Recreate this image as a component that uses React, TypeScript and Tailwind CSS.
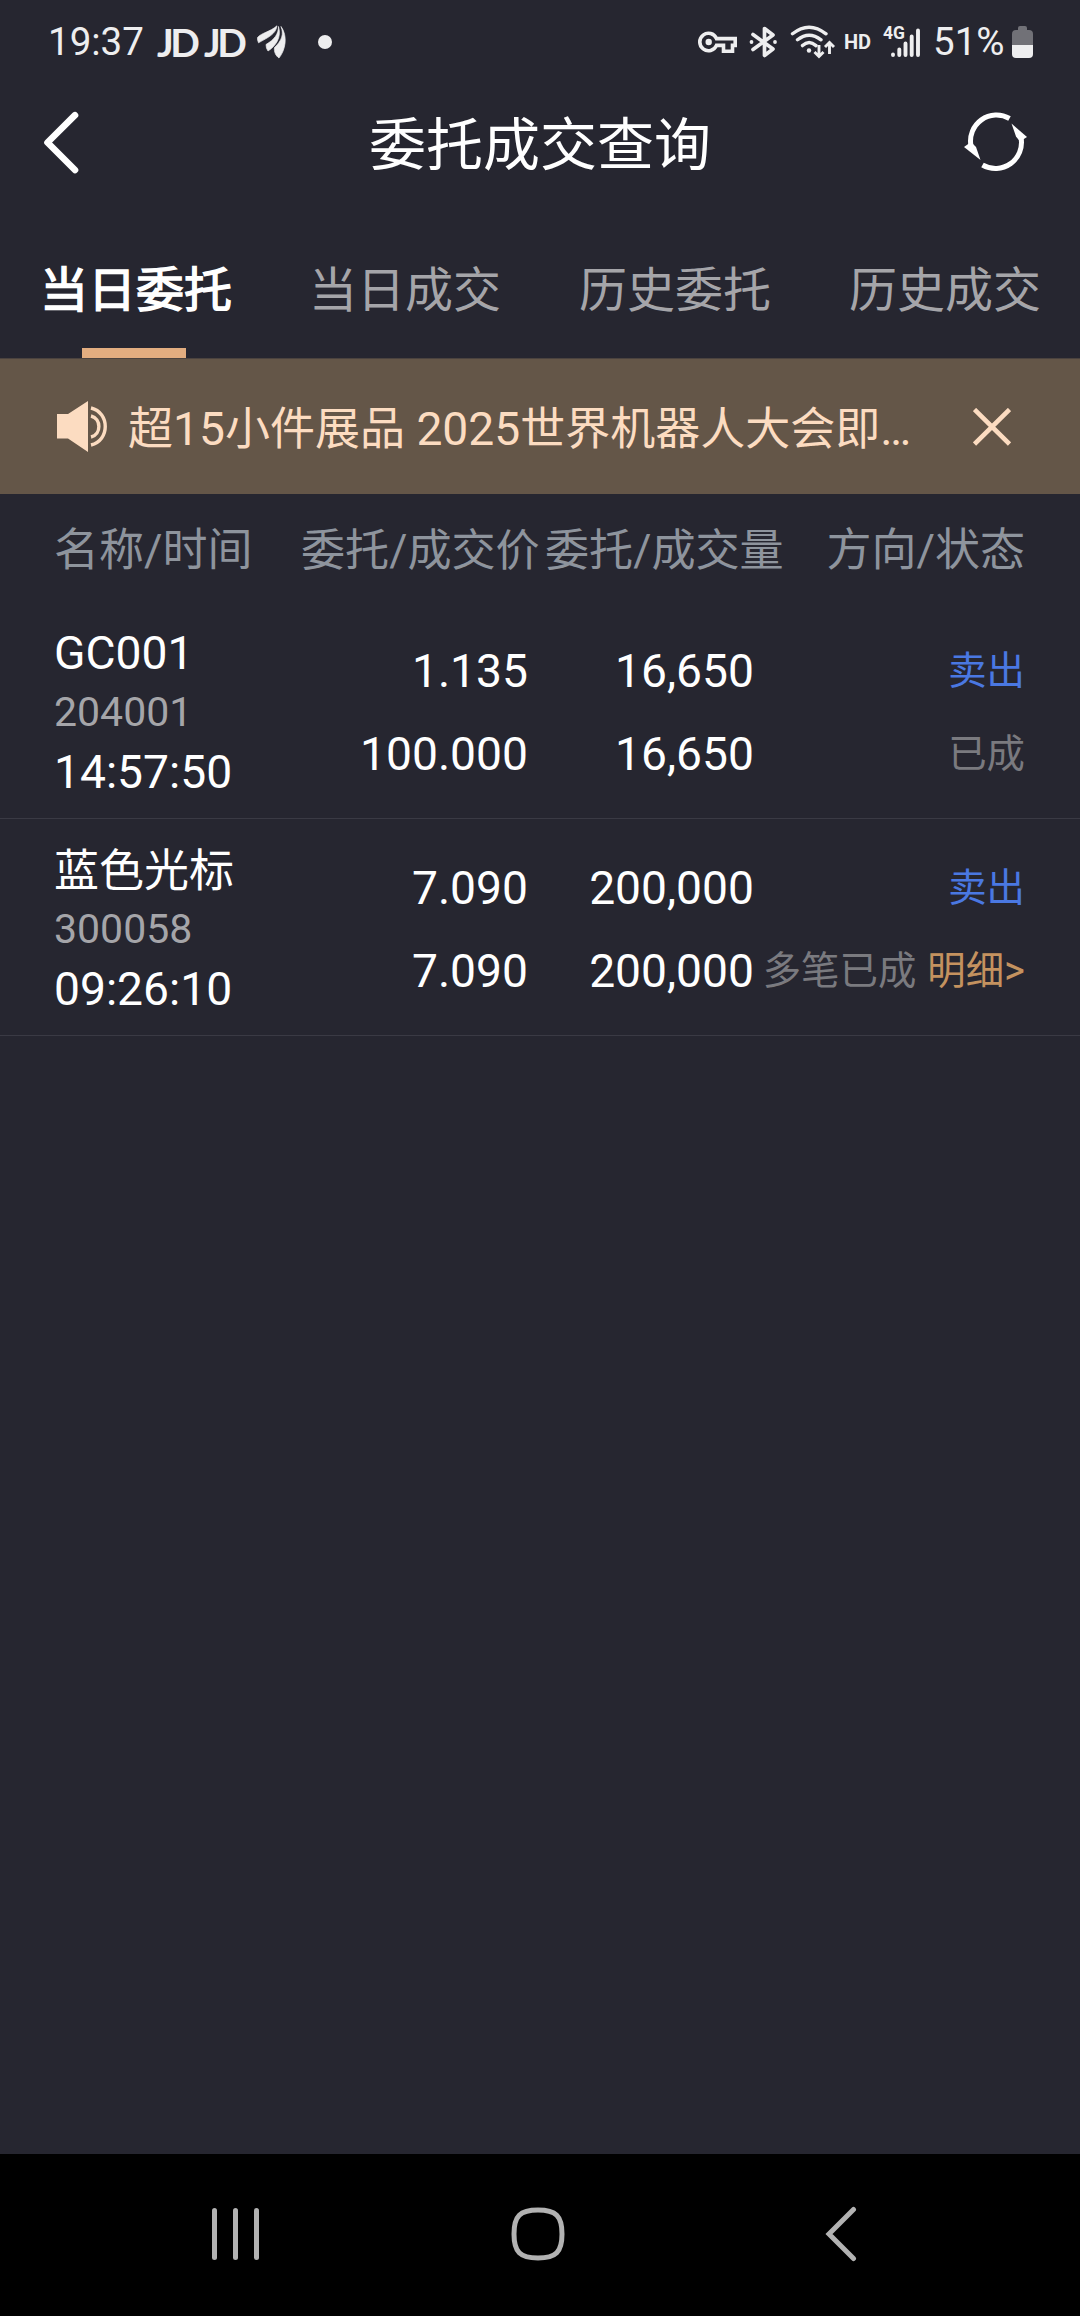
import React from "react";

type Part = { text: string; cjk?: boolean };

const tabs = ["当日委托", "当日成交", "历史委托", "历史成交"];

type Order = {
  name: string;
  cjkName?: boolean;
  code: string;
  time: string;
  price: string;
  dealPrice: string;
  amount: string;
  dealAmount: string;
  side: string;
  status: string;
  detail?: string;
};

const orders: Order[] = [
  {
    name: "GC001",
    code: "204001",
    time: "14:57:50",
    price: "1.135",
    dealPrice: "100.000",
    amount: "16,650",
    dealAmount: "16,650",
    side: "卖出",
    status: "已成",
  },
  {
    name: "蓝色光标",
    cjkName: true,
    code: "300058",
    time: "09:26:10",
    price: "7.090",
    dealPrice: "7.090",
    amount: "200,000",
    dealAmount: "200,000",
    side: "卖出",
    status: "多笔已成",
    detail: "明细>",
  },
];

const notice: Part[] = [
  { text: "超", cjk: true },
  { text: "15" },
  { text: "小件展品", cjk: true },
  { text: " 2025" },
  { text: "世界机器人大会即", cjk: true },
  { text: "…" },
];

function StatusBar() {
  return (
    <div className="flex h-[84px] shrink-0 items-center justify-between pl-[48px] pr-[47px] text-[#eeeeef]">
      <div className="flex h-full items-center">
        <span className="w-[109px] text-[38.5px] leading-[84px]">19:37</span>
        <span className="w-[47px] font-['Lato'] text-[39px] font-bold leading-[81px] tracking-[-3.500px]">JD</span>
        <span className="w-[53px] font-['Lato'] text-[39px] font-bold leading-[81px] tracking-[-3.500px]">JD</span>
        <svg className="h-[34px] w-[30px]" viewBox="0 0 30 34" fill="currentColor" stroke="currentColor" strokeWidth=".7">
          <path d="M.5 12.500C5 7.500 13 7 20 .8C19 9 11 12.500 1.500 17.800Q.2 15 .5 12.500Z" />
          <path d="M21.500 1.500C21.500 9 17.500 14.500 9 19.500Q9 23.500 11 26C18 21.500 25 13 21.500 1.500Z" />
          <path d="M24 1.500C27 9 25 15.500 17.500 22.500C16.800 27 19 31 22 33C28.500 25 31 11 24 1.500Z" />
        </svg>
        <span className="ml-[31px] h-[14px] w-[14px] rounded-full bg-[#eeeeef]" />
      </div>
      <div className="flex h-full items-center">
        <svg className="h-[36px] w-[142px]" viewBox="0 0 142 36" fill="none" stroke="currentColor">
          <g strokeWidth="3.600">
            <path d="M19.500 14.600A8.700 8.700 0 1 0 19.500 21.400H26.500V27.200H35.500V21.400H38.200V14.600Z" />
            <circle cx="11.700" cy="18" r="3.200" fill="currentColor" stroke="none" />
          </g>
          <g strokeWidth="3.700" strokeLinecap="round" strokeLinejoin="round">
            <path d="M56 10.500L76 25L67.500 31.500V4.500L76 11L56 25.500" />
          </g>
          <circle cx="54.500" cy="18" r="1.900" fill="currentColor" stroke="none" />
          <circle cx="78" cy="18" r="1.900" fill="currentColor" stroke="none" />
          <g strokeWidth="3.400" strokeLinecap="round">
            <path d="M95.500 9.800Q112 -3.500 129 9.800M100.500 15.800Q112 6.500 124 15.800M105.500 21.600Q112 15.500 119 21.600" />
          </g>
          <circle cx="112" cy="26.500" r="2.200" fill="currentColor" stroke="none" />
          <path d="M122 21V32M117.500 28L122 32.500L126.500 28M132.500 30V19M128 23L132.500 18.500L137 23" strokeWidth="2.900" />
        </svg>
        <span className="w-[44px] pl-[5px] text-[20px] font-bold leading-[84px]">HD</span>
        <span className="h-[31px] w-[21px] whitespace-nowrap text-[17.5px] font-bold leading-[13px]">4G</span>
        <svg className="ml-[-22px] h-[36px] w-[51px]" viewBox="0 0 51 36" stroke="currentColor" strokeWidth="3.900" strokeLinecap="round">
          <path d="M11 30.500V31M17.300 25.500V31M23.500 19.500V31M29.700 12.500V31M36 6.500V31" />
        </svg>
        <span className="w-[79px] text-[38.5px] leading-[84px]">51%</span>
        <svg className="h-[32px] w-[21px]" viewBox="0 0 21 32">
          <path d="M6 4V2Q6 0 8 0H13Q15 0 15 2V4H17Q21 4 21 8V19H0V8Q0 4 4 4Z" fill="#717177" />
          <path d="M0 19H21V28Q21 32 17 32H4Q0 32 0 28Z" fill="currentColor" />
        </svg>
      </div>
    </div>
  );
}

function Header() {
  return (
    <header className="flex h-[118px] shrink-0 items-center text-white">
      <div className="w-[118px] pl-[43px]">
        <svg className="h-[64px] w-[38px]" viewBox="0 0 38 64" fill="none" stroke="currentColor" strokeWidth="6.600" strokeLinecap="round" strokeLinejoin="round">
          <path d="M32 4.200L4.500 31.500L32 59" />
        </svg>
      </div>
      <h1 className="flex-1 pt-[5px] text-center text-[57px] leading-[118px]">委托成交查询</h1>
      <div className="w-[118px]">
        <svg className="h-[64px] w-[68px]" viewBox="0 0 68 64" fill="none" stroke="currentColor" strokeWidth="5">
          <path d="M47.500 7.500A26 26 0 0 0 9 35M20.500 54A26 26 0 0 0 59 26.500" />
          <path d="M49.500 12.500L65 26L58 30.500L54 25.500Z" fill="currentColor" stroke="none" />
          <path d="M18.500 49L2 36L9 31L14 36Z" fill="currentColor" stroke="none" />
        </svg>
      </div>
    </header>
  );
}

function Tabs() {
  return (
    <nav className="grid h-[157px] shrink-0 grid-cols-4 border-b border-[#4b433f]">
      {tabs.map((tab, i) => (
        <div key={tab} className="flex flex-col items-center justify-between">
          <span className={i === 0 ? "pl-[2px] pt-[41px] text-[48px] leading-[96px] text-white [-webkit-text-stroke:1.4px_white]" : "pt-[41px] text-[48px] leading-[96px] text-[#a5a5a9]"}>
            {tab}
          </span>
          {i === 0 && <span className="mr-[2px] h-[10px] w-[104px] bg-[#e2ad80]" />}
        </div>
      ))}
    </nav>
  );
}

function Notice() {
  return (
    <div className="flex h-[135px] shrink-0 items-center bg-[#645648] text-[#fcdcc1]">
      <svg className="ml-[57px] h-[52px] w-[50px]" viewBox="0 0 50 52" fill="none" stroke="currentColor">
        <path d="M0 13H11L31 0V51L11 37.500H0Z" fill="currentColor" stroke="none" />
        <path d="M34 7C53 11.500 53 39.500 34 44M34 15C44.500 17.500 44.500 33.500 34 36" strokeWidth="3.400" />
      </svg>
      <p className="ml-[21px] w-[799px] whitespace-pre pt-[5px] text-[46.200px] leading-[135px]">
        {notice.map((part) => (
          <span key={part.text} className={part.cjk ? "text-[45px]" : ""}>
            {part.text}
          </span>
        ))}
      </p>
      <svg className="ml-[46px] h-[38px] w-[38px]" viewBox="0 0 38 38" stroke="currentColor" strokeWidth="4.600">
        <path d="M1.500 1.500L36.500 36M36.500 1.500L1.500 36" />
      </svg>
    </div>
  );
}

function TableHead() {
  return (
    <div className="flex h-[108px] shrink-0 whitespace-nowrap text-[44.100px] leading-[114px] text-[#8e949d]">
      <span className="w-[301px] pl-[54px] text-[45px]">名称/时间</span>
      <span className="w-[244px]">委托/成交价</span>
      <span className="w-[237px]">委托/成交量</span>
      <span className="flex-1 pr-[55px] text-right text-[45px]">方向/状态</span>
    </div>
  );
}

function OrderRow({ order }: { order: Order }) {
  return (
    <div className="flex h-[217px] shrink-0 border-b border-[#3a3a44] text-[46.200px] text-white">
      <div className="w-[302px] pl-[54px] pt-[20px]">
        <div className={order.cjkName ? "h-[60px] text-[45px] leading-[66px]" : "h-[60px] leading-[63px]"}>{order.name}</div>
        <div className="h-[58px] text-[41px] leading-[61px] text-[#a5a5a9]">{order.code}</div>
        <div className="h-[60px] leading-[65px]">{order.time}</div>
      </div>
      <div className="w-[226px] pt-[28px] text-right leading-[83px]">
        <div>{order.price}</div>
        <div>{order.dealPrice}</div>
      </div>
      <div className="w-[226px] pt-[28px] text-right leading-[83px]">
        <div>{order.amount}</div>
        <div>{order.dealAmount}</div>
      </div>
      <div className="flex-1 pr-[55px] pt-[27px] text-right text-[38.400px] leading-[83px]">
        <div className="text-[#4a78e2]">{order.side}</div>
        <div className="flex justify-end gap-[11px] whitespace-nowrap">
          <span className="text-[#7a7a7f]">{order.status}</span>
          {order.detail && (
            <span className="text-[#c4925f]">
              {order.detail.slice(0, -1)}
              <span className="text-[40px]">{order.detail.slice(-1)}</span>
            </span>
          )}
        </div>
      </div>
    </div>
  );
}

function NavBar() {
  return (
    <div className="flex h-[162px] shrink-0 items-center bg-black pb-[2px] text-[#b2b2b2]">
      <div className="ml-[212px] flex gap-[16px]">
        <span className="h-[52px] w-[5px] rounded-full bg-[#b2b2b2]" />
        <span className="h-[52px] w-[5px] rounded-full bg-[#b2b2b2]" />
        <span className="h-[52px] w-[5px] rounded-full bg-[#b2b2b2]" />
      </div>
      <svg className="ml-[252px] h-[54px] w-[54px]" viewBox="0 0 54 54" fill="none" stroke="currentColor" strokeWidth="5">
        <path d="M27 3C45 3 51 9 51 27S45 51 27 51S3 45 3 27S9 3 27 3Z" />
      </svg>
      <svg className="ml-[260px] h-[56px] w-[32px]" viewBox="0 0 32 56" fill="none" stroke="currentColor" strokeWidth="5" strokeLinecap="round">
        <path d="M28.500 3.500L4 28L28.500 52.500" />
      </svg>
    </div>
  );
}

export default function App() {
  return (
    <div className="flex h-[2316px] w-[1080px] flex-col overflow-hidden bg-[#262630] font-['Roboto','Noto_Sans_CJK_SC',sans-serif]">
      <StatusBar />
      <Header />
      <Tabs />
      <Notice />
      <TableHead />
      {orders.map((order) => (
        <OrderRow key={order.code} order={order} />
      ))}
      <div className="flex-1" />
      <NavBar />
    </div>
  );
}
